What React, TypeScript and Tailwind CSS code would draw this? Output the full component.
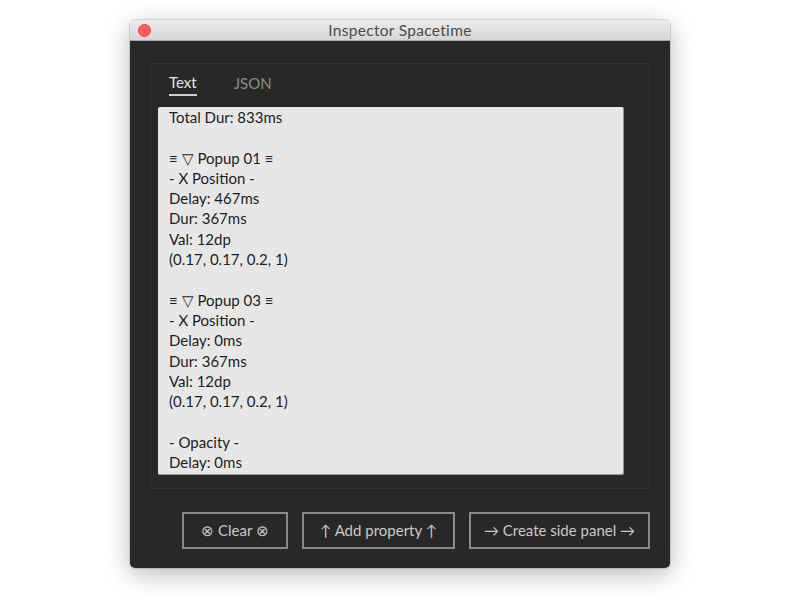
import React from 'react';

const lines = [
    'Total Dur: 833ms',
    '',
    '≡ ▽ Popup 01 ≡',
    '- X Position -',
    'Delay: 467ms',
    'Dur: 367ms',
    'Val: 12dp',
    '(0.17, 0.17, 0.2, 1)',
    '',
    '≡ ▽ Popup 03 ≡',
    '- X Position -',
    'Delay: 0ms',
    'Dur: 367ms',
    'Val: 12dp',
    '(0.17, 0.17, 0.2, 1)',
    '',
    '- Opacity -',
    'Delay: 0ms',
];

const App = () => {
    const [tab, setTab] = React.useState('Text');

    return (
        <div className="w-full h-screen bg-white flex justify-center pt-5" style={{ fontFamily: 'Lato, "Open Sans", sans-serif' }}>
            <div className="w-[540px] h-[548px] flex flex-col rounded-[5px] overflow-hidden shadow-[0_6px_24px_rgba(0,0,0,0.28),0_0_0_1px_rgba(0,0,0,0.12)]">

                {/* title bar */}
                <div className="h-[21px] relative flex items-center justify-center bg-gradient-to-b from-[#ececec] to-[#d6d6d6] border-b border-[#a9a9a9]">
                    <span className="absolute left-[8px] top-[4px] w-[13px] h-[13px] rounded-full bg-[#fc5f57] border border-[#e0443e]" />
                    <span className="text-[15.5px] leading-[20px] text-[#4b4b4b] tracking-[0.3px]">Inspector Spacetime</span>
                </div>

                {/* body */}
                <div className="flex-1 bg-[#282828] flex flex-col px-5 pt-[22px]">
                    <div className="h-[426px] border border-[#333333] rounded-[2px] flex flex-col px-[7px]">
                        <div className="flex gap-[37px] pl-[11px] pt-[6px] h-[43px]">
                            {['Text', 'JSON'].map((t) => (
                                <button
                                    key={t}
                                    onClick={() => setTab(t)}
                                    className={
                                        tab === t
                                            ? 'h-[26px] text-[15px] text-[#e6e6e6] border-b-2 border-[#cfcfcf] leading-[20px]'
                                            : 'h-[26px] text-[15px] text-[#8c8c8c] leading-[20px]'
                                    }
                                >
                                    {t}
                                </button>
                            ))}
                        </div>

                        <div className="w-[466px] h-[368px] bg-[#e7e7e7] rounded-[2px] overflow-hidden px-[11px] shadow-[inset_-1px_-1px_0_rgba(0,0,0,0.35)]">
                            <div className="text-[15px] leading-[20.3px] text-[#1c1c1c]">
                                {lines.map((l, i) => (
                                    <div key={i} className="h-[20.3px] whitespace-pre">{l || ' '}</div>
                                ))}
                            </div>
                        </div>
                    </div>

                    {/* buttons */}
                    <div className="flex justify-end gap-[14px] mt-[23px]">
                        <button className="w-[106px] h-[37px] border-2 border-[#8a8a8a] text-[15px] text-[#c9c9c9]">⊗ Clear ⊗</button>
                        <button className="w-[153px] h-[37px] border-2 border-[#8a8a8a] text-[15px] text-[#c9c9c9]">↑ Add property ↑</button>
                        <button className="w-[181px] h-[37px] border-2 border-[#8a8a8a] text-[15px] text-[#c9c9c9]">→ Create side panel →</button>
                    </div>
                </div>
            </div>
        </div>
    );
};

export default App;
